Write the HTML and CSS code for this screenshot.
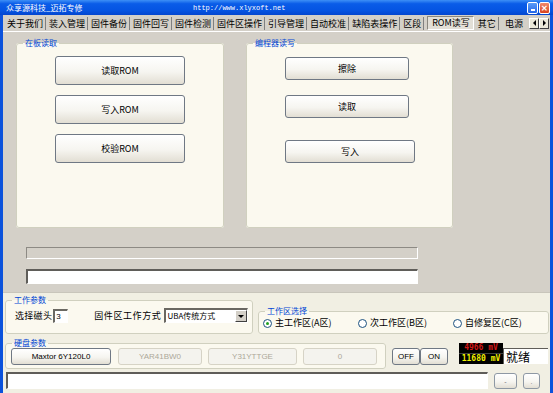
FILE: index.html
```html
<!DOCTYPE html>
<html lang="zh-CN">
<head>
  <meta charset="UTF-8">
  <title>众享源科技_迈拓专修</title>
  <link rel="stylesheet" href="styles.css">
</head>
<body>

  <div class="window">
    <div class="titlebar">
      <span class="title">众享源科技_迈拓专修</span>
      <span class="url">http://www.xlyxoft.net</span>
      <span class="caption">
        <span class="cap-btn min"><i></i></span>
        <span class="cap-btn close">✕</span>
      </span>
    </div>

    <div class="client">
      <div class="tabs">
        <span class="tab">关于我们</span>
        <span class="tab">装入管理</span>
        <span class="tab">固件备份</span>
        <span class="tab">固件回写</span>
        <span class="tab">固件检测</span>
        <span class="tab">固件区操作</span>
        <span class="tab">引导管理</span>
        <span class="tab">自动校准</span>
        <span class="tab">缺陷表操作</span>
        <span class="tab">区段</span>
        <span class="tab active">ROM读写</span>
        <span class="tab">其它</span>
        <span class="tab last">电源</span>
        <span class="tab-arrows">
          <span class="arrow left"></span>
          <span class="arrow right"></span>
        </span>
      </div>

      <div class="page">
        <div class="groups">
          <fieldset class="group onboard">
            <legend>在板读取</legend>
            <div class="group-body">
              <button class="btn big first">读取ROM</button>
              <button class="btn big">写入ROM</button>
              <button class="btn big">校验ROM</button>
            </div>
          </fieldset>
          <fieldset class="group programmer">
            <legend>编程器读写</legend>
            <div class="group-body">
              <button class="btn mid first">擦除</button>
              <button class="btn mid">读取</button>
              <button class="btn mid wide">写入</button>
            </div>
          </fieldset>
        </div>
        <div class="progress"></div>
        <div class="textbox"></div>
      </div>

      <div class="bottom">
        <div class="row params-row">
          <fieldset class="group work">
            <legend>工作参数</legend>
            <div class="work-body">
              <span class="label">选择磁头</span>
              <span class="edit head">3</span>
              <span class="label spaced">固件区工作方式</span>
              <span class="combo">
                <span class="combo-text">UBA传统方式</span>
                <span class="combo-btn"></span>
              </span>
            </div>
          </fieldset>
          <fieldset class="group zone">
            <legend>工作区选择</legend>
            <div class="radios">
              <span class="radio checked"><i></i>主工作区(A区)</span>
              <span class="radio"><i></i>次工作区(B区)</span>
              <span class="radio"><i></i>自修复区(C区)</span>
            </div>
          </fieldset>
        </div>

        <div class="row disk-row">
          <fieldset class="group disk">
            <legend>硬盘参数</legend>
            <div class="disk-body">
              <button class="btn info model">Maxtor 6Y120L0</button>
              <button class="btn info fw off">YAR41BW0</button>
              <button class="btn info sn off">Y31YTTGE</button>
              <button class="btn info cap off">0</button>
            </div>
          </fieldset>
          <div class="power">
            <button class="btn pw">OFF</button>
            <button class="btn pw">ON</button>
          </div>
          <div class="volts">
            <div class="v5">4966 mV</div>
            <div class="v12">11680 mV</div>
          </div>
          <div class="state">就绪</div>
        </div>

        <div class="row status-row">
          <div class="status"></div>
          <button class="btn tiny one">-</button>
          <button class="btn tiny two">.</button>
        </div>
      </div>
    </div>
  </div>

</body>
</html>
```

FILE: styles.css
```css
* {
  box-sizing: border-box;
}
body {
  margin: 0;
  font-family: "Noto Sans CJK SC", "Liberation Sans", sans-serif;
  font-size: 9px;
  color: #000;
  background: #fff;
}
.window {
  width: 553px;
  height: 393px;
  display: flex;
  flex-direction: column;
  background: #0b52dc;
  overflow: hidden;
}

/* title bar */
.titlebar {
  height: 15px;
  display: flex;
  align-items: center;
  padding: 0 3px 0 6px;
  background: linear-gradient(#3d8ff6 0, #0a5ce8 25%, #0554e2 70%, #0346cf 100%);
  color: #fff;
}
.title {
  font-size: 8px;
  width: 187px;
}
.url {
  font-family: "Liberation Mono", monospace;
  font-size: 7px;
  flex: 1;
}
.caption {
  display: flex;
  gap: 1px;
}
.cap-btn {
  width: 11px;
  height: 12px;
  border: 1px solid #fff;
  border-radius: 2px;
  display: flex;
  align-items: center;
  justify-content: center;
  font-size: 8px;
  line-height: 1;
}
.cap-btn.min {
  background: linear-gradient(#5a9cf8, #2466e8);
  align-items: flex-end;
  padding-bottom: 2px;
}
.cap-btn.min i {
  width: 4px;
  height: 2px;
  background: #fff;
}
.cap-btn.close {
  background: linear-gradient(#f08a6c, #d8431f);
  font-weight: bold;
}

/* client area */
.client {
  flex: 1;
  margin: 0 3px;
  display: flex;
  flex-direction: column;
  background: #d4d0c8;
}
.tabs {
  height: 16px;
  display: flex;
  align-items: center;
  padding-left: 1px;
}
.tab {
  padding: 0 2px 0 3px;
  height: 13px;
  line-height: 13px;
  border-right: 1px solid #808080;
  white-space: nowrap;
}
.tab.active {
  margin: 0 1px 0 3px;
  padding: 0 3px 0 4px;
  background: #e2dfd7;
  border: 1px solid #8a877f;
  border-right-color: #fff;
  border-bottom-color: #fff;
  height: 14px;
  line-height: 12px;
}
.tab.last {
  margin-left: 3px;
  border-right: none;
}
.tab-arrows {
  display: flex;
  margin-left: auto;
  margin-right: 1px;
}
.arrow {
  width: 10px;
  height: 11px;
  background: #ece9d8;
  border: 1px solid #fff;
  border-right-color: #404040;
  border-bottom-color: #404040;
  display: flex;
  align-items: center;
  justify-content: center;
}
.arrow::after {
  content: "";
  border: 3px solid transparent;
}
.arrow.left::after {
  border-right: 3px solid #000;
  border-left: none;
}
.arrow.right::after {
  border-left: 3px solid #000;
  border-right: none;
}

/* tab page */
.page {
  height: 261px;
  border-top: 1px solid #fff;
  padding: 6px 0 0 13px;
}
.groups {
  display: flex;
  gap: 22px;
}
.group {
  margin: 0;
  padding: 0;
  border: 1px solid #d0d0bf;
  border-radius: 3px;
  background: #fbf9ef;
}
.group legend {
  margin-left: 6px;
  padding: 0 2px;
  font-size: 8px;
  line-height: 10px;
  color: #0046d5;
}
.onboard {
  width: 208px;
  height: 190px;
}
.programmer {
  width: 207px;
  height: 190px;
}
.group-body {
  display: flex;
  flex-direction: column;
  align-items: flex-start;
  padding-left: 38px;
}
.btn {
  font-family: "Noto Sans CJK SC", "Liberation Sans", sans-serif;
  font-size: 9px;
  color: #000;
  padding: 0;
  border: 1px solid #6f7884;
  border-radius: 3px;
  background: linear-gradient(#ffffff, #f6f5f0 55%, #e2ded3);
}
.btn.big {
  width: 130px;
  height: 29px;
  margin-top: 10px;
}
.btn.big.first {
  margin-top: 8px;
}
.btn.mid {
  width: 124px;
  height: 23px;
  margin-top: 15px;
}
.btn.mid.first {
  margin-top: 9px;
}
.btn.mid.wide {
  width: 130px;
  margin-top: 22px;
}
.progress {
  width: 392px;
  height: 12px;
  margin: 19px 0 0 10px;
  border: 1px solid #fff;
  border-top-color: #8d8a84;
  border-left-color: #8d8a84;
  background: #d4d0c8;
}
.textbox {
  width: 392px;
  height: 15px;
  margin: 10px 0 0 10px;
  border: 1px solid #fff;
  border-top: 2px solid #5f5d59;
  border-left: 2px solid #5f5d59;
  background: #fff;
}

/* lower panel */
.bottom {
  flex: 1;
  background: #f1efe3;
  border-top: 1px solid #c8c5bb;
  padding: 2px 0 0 2px;
}
.row {
  display: flex;
  align-items: flex-start;
}
.work {
  width: 248px;
  height: 39px;
}
.work-body {
  display: flex;
  align-items: center;
  padding: 3px 0 0 9px;
}
.label {
  font-size: 9px;
  line-height: 14px;
  letter-spacing: 0.3px;
}
.label.spaced {
  margin-left: 26px;
  letter-spacing: 0.6px;
}
.edit {
  background: #fff;
  border: 1px solid #fff;
  border-top: 2px solid #6a6862;
  border-left: 2px solid #6a6862;
  height: 14px;
  line-height: 11px;
  font-size: 8px;
  font-family: "Liberation Sans", sans-serif;
  padding-left: 1px;
}
.edit.head {
  width: 15px;
  margin-left: 1px;
}
.combo {
  width: 84px;
  height: 15px;
  margin-left: 3px;
  display: flex;
  background: #fff;
  border: 1px solid #fff;
  border-top: 2px solid #6a6862;
  border-left: 2px solid #6a6862;
}
.combo-text {
  flex: 1;
  font-size: 8px;
  line-height: 11px;
  padding-left: 1px;
}
.combo-btn {
  width: 12px;
  background: #d4d0c8;
  border: 1px solid #fff;
  border-right-color: #404040;
  border-bottom-color: #404040;
  display: flex;
  align-items: center;
  justify-content: center;
}
.combo-btn::after {
  content: "";
  border: 3px solid transparent;
  border-top: 3px solid #000;
  border-bottom: none;
}
.zone {
  width: 290px;
  height: 28px;
  margin: 11px 0 0 5px;
}
.radios {
  display: flex;
  padding: 1px 0 0 4px;
}
.radio {
  display: flex;
  align-items: center;
  gap: 3px;
  line-height: 12px;
  width: 95px;
}
.radio i {
  width: 9px;
  height: 9px;
  border-radius: 50%;
  border: 1px solid #1c5180;
  background: #fff;
  display: flex;
  align-items: center;
  justify-content: center;
}
.radio.checked i::after {
  content: "";
  width: 3px;
  height: 3px;
  border-radius: 50%;
  background: #21a121;
}

.disk-row {
  margin-top: 4px;
}
.disk {
  width: 381px;
  height: 31px;
}
.disk-body {
  display: flex;
  gap: 6px;
  padding-left: 5px;
}
.btn.info {
  height: 17px;
  font-family: "Liberation Sans", sans-serif;
  font-size: 8px;
}
.btn.info.off {
  color: #aca899;
  border-color: #d6d3c6;
  background: #f4f3ee;
}
.model {
  width: 100px;
}
.fw {
  width: 84px;
  margin-left: 1px;
}
.sn {
  width: 89px;
}
.cap {
  width: 74px;
}
.power {
  display: flex;
  margin: 10px 0 0 6px;
}
.btn.pw {
  width: 28px;
  height: 17px;
  font-family: "Liberation Sans", sans-serif;
  font-size: 8px;
}
.volts {
  width: 44px;
  margin: 5px 0 0 11px;
  background: #000;
  font-family: "DejaVu Sans Mono", monospace;
  font-size: 8px;
  font-weight: bold;
  line-height: 10px;
  text-align: center;
}
.v5 {
  color: #d01818;
  border-bottom: 1px solid #404040;
}
.v12 {
  color: #f0f000;
}
.state {
  width: 45px;
  height: 16px;
  margin-top: 10px;
  background: #fff;
  border-top: 1px solid #5f5d59;
  border-left: 1px solid #5f5d59;
  font-size: 12px;
  line-height: 15px;
  padding-left: 2px;
}

.status-row {
  margin-top: 3px;
}
.status {
  width: 482px;
  height: 17px;
  margin-left: 1px;
  background: #fff;
  border: 1px solid #fff;
  border-top: 2px solid #5f5d59;
  border-left: 2px solid #5f5d59;
}
.btn.tiny {
  height: 16px;
  margin-top: 1px;
  font-family: "Liberation Sans", sans-serif;
  font-size: 7px;
  color: #777;
  border-color: #8e98a4;
}
.btn.tiny.one {
  width: 23px;
  margin-left: 6px;
}
.btn.tiny.two {
  width: 17px;
  margin-left: 6px;
}
```
